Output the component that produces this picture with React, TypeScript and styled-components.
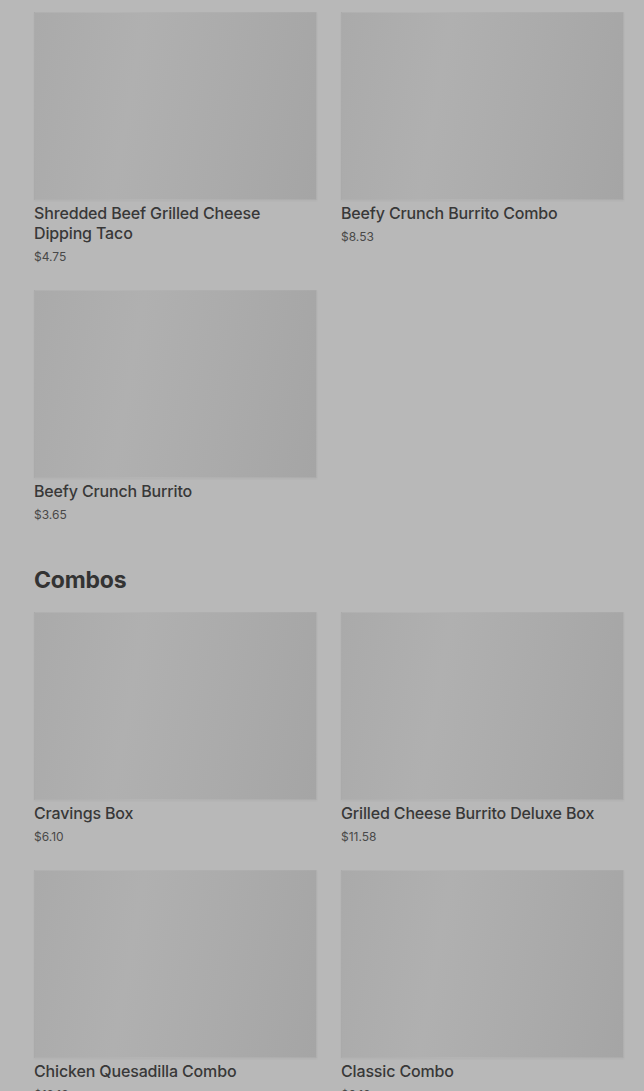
import React from 'react';
import styled, {createGlobalStyle} from 'styled-components';

const GlobalStyle = createGlobalStyle`
  html, body {
    margin: 0;
    padding: 0;
    background: #b8b8b8;
  }
  * {
    box-sizing: border-box;
  }
`;

const Page = styled.main`
  min-height: 100vh;
  padding: 12px 20px 0 34px;
  background: #b8b8b8;
  font-family: Inter, "Noto Sans", sans-serif;
  color: #363636;
  overflow: hidden;
`;

const Section = styled.section`
  display: flex;
  flex-direction: column;
`;

const SectionTitle = styled.h2`
  margin: 42px 0 18px;
  font-family: Inter, "Noto Sans", sans-serif;
  font-size: 23px;
  line-height: 28px;
  font-weight: 700;
  letter-spacing: -0.2px;
  color: #333;
`;

const Grid = styled.div`
  display: grid;
  grid-template-columns: 283px 283px;
  column-gap: 24px;
  row-gap: 24px;
`;

const Card = styled.article`
  display: flex;
  flex-direction: column;
`;

const Thumb = styled.div`
  height: 188px;
  background: linear-gradient(100deg, #aaaaaa 0%, #b0b0b0 35%, #ababab 65%, #a5a5a5 100%);
  border: 1px solid rgba(255, 255, 255, 0.06);
  box-shadow: 0 1px 2px rgba(0, 0, 0, 0.04);
`;

const Name = styled.h3`
  margin: 3px 0 0;
  font-size: 16px;
  line-height: 20px;
  font-weight: 500;
  letter-spacing: -0.15px;
  color: #383838;
`;

const Price = styled.span`
  margin-top: 5px;
  font-size: 12px;
  line-height: 18px;
  color: #484848;
`;

type Item = {name: string; price: string};

const featured: Item[] = [
    {name: 'Shredded Beef Grilled Cheese Dipping Taco', price: '$4.75'},
    {name: 'Beefy Crunch Burrito Combo', price: '$8.53'},
    {name: 'Beefy Crunch Burrito', price: '$3.65'},
];

const combos: Item[] = [
    {name: 'Cravings Box', price: '$6.10'},
    {name: 'Grilled Cheese Burrito Deluxe Box', price: '$11.58'},
    {name: 'Chicken Quesadilla Combo', price: '$12.13'},
    {name: 'Classic Combo', price: '$9.19'},
];

function MenuCard({name, price}: Item) {
    return (
        <Card>
            <Thumb/>
            <Name>{name}</Name>
            <Price>{price}</Price>
        </Card>
    );
}

function App() {
    return (
        <Page>
            <GlobalStyle/>
            <Section>
                <Grid>
                    {featured.map(i => <MenuCard key={i.name} {...i}/>)}
                </Grid>
            </Section>
            <Section>
                <SectionTitle>Combos</SectionTitle>
                <Grid>
                    {combos.map(i => <MenuCard key={i.name} {...i}/>)}
                </Grid>
            </Section>
        </Page>
    );
}

export default App;
